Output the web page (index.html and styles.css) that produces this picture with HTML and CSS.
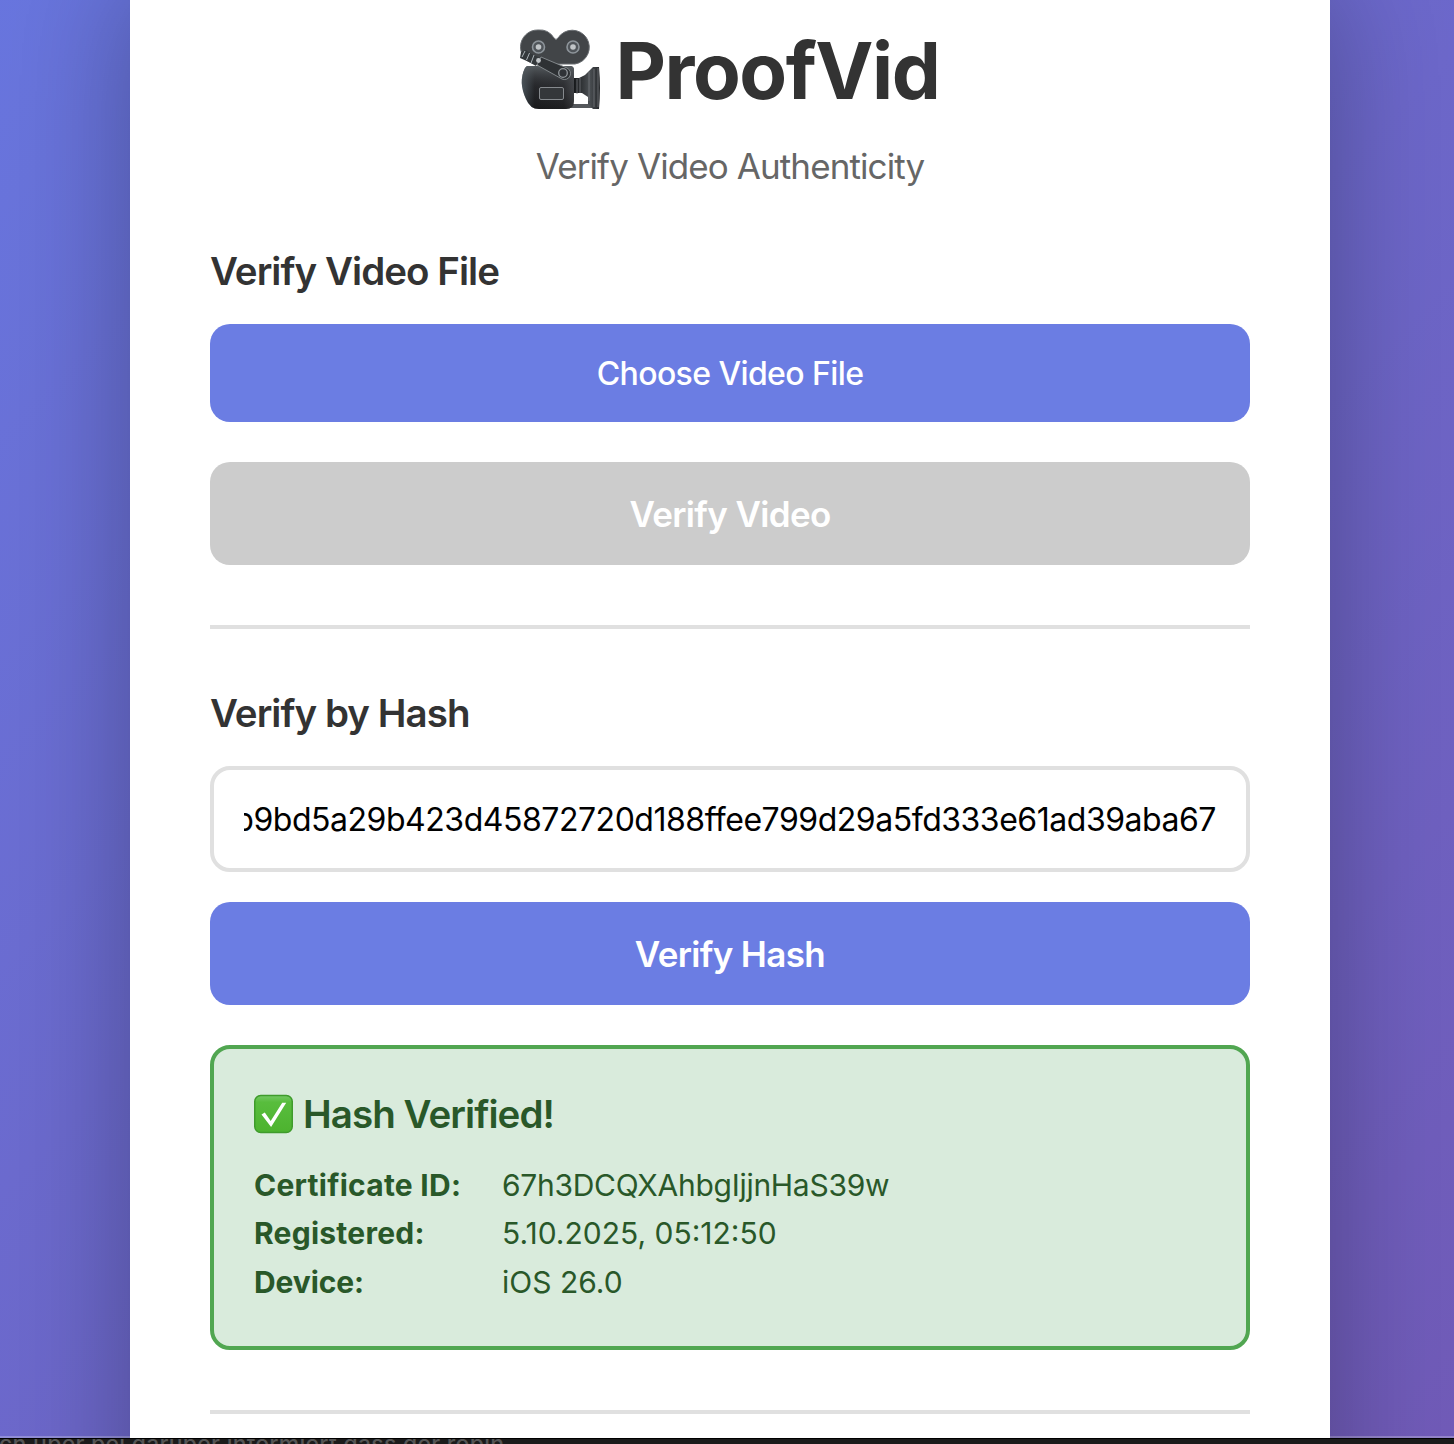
FILE: index.html
```html
<!DOCTYPE html>
<html lang="en">
<head>
<meta charset="utf-8">
<title>ProofVid</title>
<link rel="stylesheet" href="styles.css">
</head>
<body>
<div class="viewport">
  <main class="card">
    <header class="header">
      <h1 class="title">
        <svg class="camera" viewBox="0 0 100 100" aria-hidden="true">
          <defs>
            <linearGradient id="body" x1="0" y1="0" x2="1" y2="0"><stop offset="0" stop-color="#55636b"/><stop offset=".25" stop-color="#202124"/><stop offset=".8" stop-color="#2a2b2e"/><stop offset="1" stop-color="#4c4e52"/></linearGradient>
            <linearGradient id="shade" x1="0" y1="0" x2="0" y2="1"><stop offset="0" stop-color="#5b6165" stop-opacity=".9"/><stop offset=".5" stop-color="#303236" stop-opacity=".3"/><stop offset="1" stop-color="#111" stop-opacity=".5"/></linearGradient>
            <linearGradient id="hood" x1="0" y1="0" x2="1" y2="0"><stop offset="0" stop-color="#17191b"/><stop offset=".6" stop-color="#4b4f53"/><stop offset="1" stop-color="#25272a"/></linearGradient>
          </defs>
          <path d="M58 83h31v4H52z" fill="#55585c"/>
          <path d="M28 9a17 17 0 0 1 16 8q2 3 4 0A17 17 0 1 1 65 43H27A17 17 0 0 1 28 9z" fill="#424548" stroke="#686c70" stroke-width="1"/>
          <g stroke="#8e959b" stroke-width="1.6" fill="#50555a"><circle cx="28.500" cy="26" r="6"/><circle cx="63" cy="26" r="6"/></g>
          <g fill="#c1c5c8"><circle cx="28.500" cy="26" r="2.800"/><circle cx="63" cy="26" r="2.800"/></g>
          <path d="M17 45h43q4 0 4 4v31q0 8-8 8H29q-9 0-13-10-8-17-1-31z" fill="url(#body)"/>
          <path d="M17 45h43q4 0 4 4v31q0 8-8 8H29q-9 0-13-10-8-17-1-31z" fill="url(#shade)"/>
          <rect x="29.500" y="66.500" width="24" height="12" rx="1.500" fill="#34373a" stroke="#868a8e"/>
          <path d="M64 57l5 0 6-3 4-4 4-4h6q2 21 0 42h-6l-5-5v-7l-6-4h-8z" fill="url(#hood)"/>
          <path d="M67 58v15M70 57v15M79 51v29M84 48v38M88 47v39" fill="none" stroke="#73777b" stroke-width=".8"/>
          <path d="M31 36l26 11a6 6 0 0 1-5 11L27 44z" fill="#2e3134" stroke="#898e92" stroke-width=".9"/>
          <circle cx="53" cy="52" r="4.300" fill="#303337" stroke="#92979b" stroke-width="1.300"/>
          <path d="M11 31l5-2 4 3 10 5-4 8-7-4-9-4z" fill="#34383b"/>
          <path d="M15 30l-3 6M19.500 32l-3 7M24 34l-3 8" stroke="#aeb5ba" stroke-width="1"/>
          <circle cx="28.500" cy="39.500" r="2.400" fill="#c3c7ca"/>
        </svg>
        <span class="brand">ProofVid</span>
      </h1>
      <p class="subtitle"><span>Verify Video Authenticity</span></p>
    </header>

    <section class="section">
      <h2 class="heading">Verify Video File</h2>
      <button class="button choose">Choose Video File</button>
      <button class="button disabled">Verify Video</button>
    </section>

    <section class="section by-hash">
      <h2 class="heading">Verify by Hash</h2>
      <div class="hash-input"><span class="hash">b9bd5a29b423d45872720d188ffee799d29a5fd333e61ad39aba67</span></div>
      <button class="button">Verify Hash</button>
      <div class="result">
        <h3 class="result-title">
          <svg class="check" viewBox="0 0 40 40" aria-hidden="true">
            <defs><linearGradient id="green" x1="0" y1="0" x2="0" y2="1"><stop offset="0" stop-color="#75c965"/><stop offset=".18" stop-color="#58bd3d"/><stop offset="1" stop-color="#4db32f"/></linearGradient></defs>
            <rect x=".75" y="1.500" width="37.500" height="37" rx="6" fill="url(#green)" stroke="#3f9b2c" stroke-width="1.500"/>
            <path d="M7.500 20.500l3.300-2 5.900 8.400L28.200 8.800h4L17.100 33z" fill="#fff"/>
          </svg>
          <span>Hash Verified!</span>
        </h3>
        <dl class="details">
          <dt>Certificate ID:</dt><dd class="cert">67h3DCQXAhbgIjjnHaS39w</dd>
          <dt>Registered:</dt><dd>5.10.2025, 05:12:50</dd>
          <dt class="device">Device:</dt><dd>iOS 26.0</dd>
        </dl>
      </div>
    </section>
  </main>
</div>
<footer class="strip"><span>ch über bei darüber informiert dass der robin</span></footer>
</body>
</html>
```
FILE: styles.css
```css
* { box-sizing: border-box; }
body {
  margin: 0;
  height: 1444px;
  overflow: hidden;
  font-family: Inter, "Liberation Sans", sans-serif;
  color: #333;
}
h1, h2, h3, p, dl, dd { margin: 0; }
.viewport {
  height: 1438px;
  overflow: hidden;
  background:
    linear-gradient(rgba(255, 255, 255, .25), rgba(255, 255, 255, .25)) bottom / 100% 2px no-repeat,
    linear-gradient(135deg, #667eea -30%, #764ba2 160%);
}
.card {
  width: 1200px;
  height: 1900px;
  margin: -60px 0 0 130px;
  padding: 82px 80px 0;
  background: #fff;
  box-shadow: 0 40px 120px rgba(0, 0, 0, .3);
}
.header { display: flex; flex-direction: column; align-items: center; }
.title {
  display: flex;
  align-items: center;
  height: 96px;
  font-size: 78px;
  font-weight: 700;
}
.camera { width: 100px; height: 100px; margin: 1px 5px 0 0; }
.brand { letter-spacing: -1.45px; margin-right: 10px; }
.subtitle { margin-top: 21px; height: 55px; font-size: 35px; line-height: 54px; letter-spacing: -.9px; color: #666; }
.section { display: flex; flex-direction: column; border-bottom: 4px solid #e0e0e0; padding: 54px 0 60px; }
.heading { height: 48px; line-height: 46px; font-size: 38.5px; font-weight: 600; letter-spacing: -.95px; margin-bottom: 28px; }
.button {
  height: 103px;
  padding: 0;
  border: 0;
  border-radius: 20px;
  background: #6b7de3;
  color: #fff;
  font: 600 35px Inter, "Liberation Sans", sans-serif;
  letter-spacing: -.65px;
}
.choose { height: 98px; margin-bottom: 40px; font-size: 32px; font-weight: 500; letter-spacing: -.6px; }
.disabled { background: #ccc; }
.by-hash { padding-top: 61px; }
.hash-input {
  display: flex;
  height: 106px;
  padding: 0 30px;
  margin-bottom: 30px;
  border: 4px solid #e0e0e0;
  border-radius: 20px;
}
.hash {
  display: flex;
  flex: 1;
  justify-content: flex-end;
  overflow: hidden;
  line-height: 100px;
  font-size: 32px;
  letter-spacing: -.47px;
  color: #000;
}
.result {
  height: 305px;
  margin-top: 40px;
  padding: 40px;
  border: 4px solid #51a651;
  border-radius: 20px;
  background: #d9ebdc;
  color: #295829;
}
.result-title { display: flex; align-items: center; height: 50px; font-size: 38.5px; font-weight: 600; letter-spacing: -.93px; gap: 9px; }
.check { width: 40px; height: 40px; }
.details {
  display: grid;
  grid-template-columns: 248px 1fr;
  margin-top: 22px;
  font-size: 30px;
  line-height: 48.4px;
}
dt { font-weight: 700; letter-spacing: .25px; }
.device { letter-spacing: -.1px; }
.cert { letter-spacing: -.28px; }
.strip {
  height: 6px;
  overflow: hidden;
  border-top: 1px solid #000;
  background: #1b1b1b;
  color: #555;
  font: 500 23px/28px Inter, "Liberation Sans", sans-serif;
  letter-spacing: .27px;
}
.strip span { display: block; margin: -9px 0 0 -1px; }
```
